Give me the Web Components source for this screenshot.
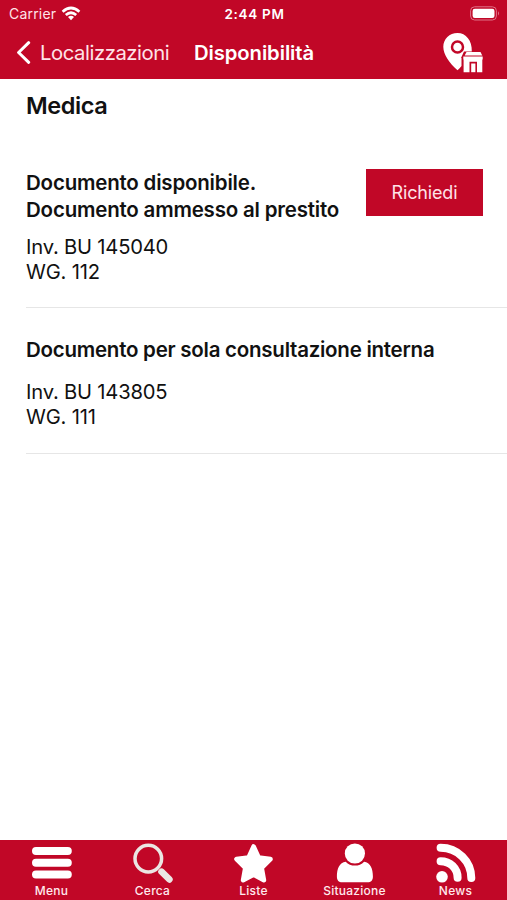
<!DOCTYPE html>
<html lang="it">
<head>
<meta charset="utf-8">
<title>Disponibilità</title>
<style>
    body {
        margin: 0;
        background: #fff;
        font-family: Inter, "Liberation Sans", sans-serif;
        color: #111;
    }
</style>
</head>
<body>
<app-screen>
    <status-bar slot="top" carrier="Carrier" time="2:44 PM"></status-bar>
    <nav-header slot="top" back="Localizzazioni">Disponibilità</nav-header>

    <library-section>
        <span slot="title">Medica</span>
        <copy-item action="Richiedi">
            <span slot="status">Documento disponibile.<br>Documento ammesso al prestito</span>
            <span slot="inventory">Inv. BU 145040</span>
            <span slot="shelf">WG. 112</span>
        </copy-item>
        <copy-item>
            <span slot="status">Documento per sola consultazione interna</span>
            <span slot="inventory">Inv. BU 143805</span>
            <span slot="shelf">WG. 111</span>
        </copy-item>
    </library-section>

    <tab-bar slot="bottom">
        <tab-item icon="menu">Menu</tab-item>
        <tab-item icon="search">Cerca</tab-item>
        <tab-item icon="star">Liste</tab-item>
        <tab-item icon="user">Situazione</tab-item>
        <tab-item icon="feed">News</tab-item>
    </tab-bar>
</app-screen>

<script>
class AppScreen extends HTMLElement {
    constructor() {
        super();
        this.attachShadow({ mode: 'open' });
    }

    connectedCallback() {
        this.shadowRoot.innerHTML = `
            <style>
                :host {
                    display: flex;
                    flex-direction: column;
                    height: 900px;
                    overflow: hidden;
                    --red: #c10727;
                }
                header {
                    height: 79px;
                    background: var(--red);
                    color: #fff;
                }
                main {
                    flex: 1;
                }
            </style>
            <header><slot name="top"></slot></header>
            <main><slot></slot></main>
            <slot name="bottom"></slot>
        `;
    }
}

class StatusBar extends HTMLElement {
    constructor() {
        super();
        this.attachShadow({ mode: 'open' });
    }

    connectedCallback() {
        this.shadowRoot.innerHTML = `
            <style>
                :host {
                    display: grid;
                    grid-template-columns: 1fr auto 1fr;
                    align-items: center;
                    height: 27px;
                    padding: 0 7px 0 9px;
                    font-size: 14px;
                }
                .carrier {
                    display: flex;
                    align-items: center;
                    gap: 5px;
                    color: #ffe3e8;
                    letter-spacing: 0.2px;
                }
                .time {
                    font-weight: 600;
                    font-size: 13.5px;
                    letter-spacing: 0.7px;
                }
                .battery {
                    justify-self: end;
                }
                svg {
                    display: block;
                }
            </style>
            <div class="carrier">
                <span>${this.getAttribute('carrier')}</span>
                <svg width="20" height="15" viewBox="0 0 20 15" fill="none" stroke="#fff" stroke-width="2.7">
                    <path d="M1.6 5.8Q10-1.8 18.4 5.8"/>
                    <path d="M4.8 9.1Q10 4.4 15.2 9.1"/>
                    <path d="M7 11.1Q10 8.5 13 11.1L10 14.2Z" fill="#fff" stroke="none"/>
                </svg>
            </div>
            <span class="time">${this.getAttribute('time')}</span>
            <svg class="battery" width="30" height="15" viewBox="0 0 30 15">
                <rect x=".6" y=".8" width="25.8" height="13.2" rx="4" fill="none" stroke="#df7288" stroke-width="1"/>
                <rect x="2.6" y="2.8" width="21.9" height="9.2" rx="2.2" fill="#fff"/>
                <path d="M28 5.2Q30 7.3 28 9.4Z" fill="#df7288"/>
            </svg>
        `;
    }
}

class NavHeader extends HTMLElement {
    constructor() {
        super();
        this.attachShadow({ mode: 'open' });
    }

    connectedCallback() {
        this.shadowRoot.innerHTML = `
            <style>
                :host {
                    display: flex;
                    align-items: center;
                    height: 51px;
                    padding: 0 24px 0 16px;
                    font-size: 20.3px;
                }
                .back {
                    display: flex;
                    align-items: center;
                    gap: 8px;
                    width: 178px;
                    color: #ffe3e8;
                    letter-spacing: -0.45px;
                }
                .title {
                    flex: 1;
                    font-weight: 600;
                    letter-spacing: -0.1px;
                }
                svg {
                    display: block;
                }
            </style>
            <div class="back">
                <svg width="16" height="24" viewBox="0 0 16 24" fill="none" stroke="#fff" stroke-width="3" stroke-linecap="round" stroke-linejoin="round">
                    <path d="M12.7 1.7 2.6 11.5l10.1 9.8"/>
                </svg>
                <span>${this.getAttribute('back')}</span>
            </div>
            <span class="title"><slot></slot></span>
            <svg width="40" height="40" viewBox="0 0 40 40">
                <path d="M14.5 0C6.4 0 .3 6.1.3 13.8c0 8.2 6.2 16.2 14.2 23.5 1.4-1.3 2.9-2.6 4-4.2v-8.1h-.5l3-6.5h7.8C29.2 7.6 23 0 14.5 0Z" fill="#fff"/>
                <circle cx="14.5" cy="14" r="5.5" fill="#fff" stroke="#c10727" stroke-width="2.5"/>
                <path d="M23.5 18.9h14l1.8 3.7H21.7Z" fill="#fff"/>
                <path d="M20.3 23.6h19.4v3H39.3v12.6h-5.3V28.7h-7.5v10.5h-5.9V26.6h-.3Z" fill="#fff"/>
                <path d="M28.2 30.5h4.2v8.7h-4.2Z" fill="#fff"/>
            </svg>
        `;
    }
}

class LibrarySection extends HTMLElement {
    constructor() {
        super();
        this.attachShadow({ mode: 'open' });
    }

    connectedCallback() {
        this.shadowRoot.innerHTML = `
            <style>
                :host {
                    display: block;
                    padding: 12px 0 0 26px;
                }
                h2 {
                    margin: 0 0 43px;
                    font-size: 23.5px;
                    font-weight: 600;
                    line-height: 30px;
                    letter-spacing: -0.4px;
                }
            </style>
            <h2><slot name="title"></slot></h2>
            <slot></slot>
        `;
    }
}

class CopyItem extends HTMLElement {
    constructor() {
        super();
        this.attachShadow({ mode: 'open' });
    }

    connectedCallback() {
        const action = this.getAttribute('action');
        this.shadowRoot.innerHTML = `
            <style>
                :host {
                    display: flex;
                    justify-content: space-between;
                    align-items: flex-start;
                    box-sizing: border-box;
                    height: 144px;
                    padding: 5px 24px 0 0;
                    border-bottom: 1px solid #e6e6e6;
                    white-space: nowrap;
                }
                :host(:not([action])) {
                    height: 146px;
                    padding-top: 28px;
                }
                .status {
                    margin-bottom: 11px;
                    font-size: 20.5px;
                    font-weight: 600;
                    line-height: 27px;
                    letter-spacing: -0.2px;
                }
                :host(:not([action])) .status {
                    margin-bottom: 16px;
                    letter-spacing: -0.25px;
                }
                .place {
                    font-size: 20.2px;
                    line-height: 25px;
                    letter-spacing: -0.2px;
                }
                .place div {
                    height: 25px;
                }
                button {
                    width: 117px;
                    height: 47px;
                    margin: 0;
                    padding: 0;
                    border: 0;
                    background: var(--red);
                    color: #ffe3e8;
                    font: 18px Inter, "Liberation Sans", sans-serif;
                    letter-spacing: -0.15px;
                }
            </style>
            <div>
                <div class="status"><slot name="status"></slot></div>
                <div class="place">
                    <div><slot name="inventory"></slot></div>
                    <div><slot name="shelf"></slot></div>
                </div>
            </div>
            ${action ? `<button>${action}</button>` : ''}
        `;
    }
}

class TabBar extends HTMLElement {
    constructor() {
        super();
        this.attachShadow({ mode: 'open' });
    }

    connectedCallback() {
        this.shadowRoot.innerHTML = `
            <style>
                :host {
                    display: grid;
                    grid-template-columns: repeat(5, 101px);
                    height: 60px;
                    background: var(--red);
                    color: #ffe9ed;
                }
            </style>
            <slot></slot>
        `;
    }
}

const icons = {
    menu: '<path d="M5 8h31.8M5 19.7h31.8M5 31.4h31.8" stroke="#fff" stroke-width="8" stroke-linecap="round"/>',
    search: `
        <circle cx="16.3" cy="15.6" r="13.3" fill="none" stroke="#ebe6e3" stroke-width="3.5"/>
        <path d="M29.5 28.7l7.9 7.7" stroke="#ebe6e3" stroke-width="6.6" stroke-linecap="round"/>`,
    star: '<path d="M20.6 3.5l5 11 11.9 1.6-8.8 8.8 2.2 12.3L20.6 31.7l-10.5 5.5 2.2-12.3-8.8-8.8 12.1-1.6Z" fill="#fff" stroke="#fff" stroke-width="4.6" stroke-linejoin="round"/>',
    user: `
        <circle cx="20.9" cy="10.5" r="10.1" fill="#fff"/>
        <path d="M11.7 18.7C5.5 19.6 2.9 25.5 2.9 33.5c0 4 1.9 5.8 5.3 5.8h25.4c3.4 0 5.3-1.8 5.3-5.8 0-8-2.6-13.9-8.8-14.8-4.6 5.2-13.8 5.2-18.4 0Z" fill="#fff"/>`,
    feed: `
        <circle cx="7" cy="33.800" r="5.800" fill="#fff"/>
        <path d="M5.600 18.200c9.500 0 17 7.200 17 16.600M5.600 4.800c17 0 30.700 13.400 30.700 30.300" fill="none" stroke="#fff" stroke-width="8" stroke-linecap="round"/>`
};

class TabItem extends HTMLElement {
    constructor() {
        super();
        this.attachShadow({ mode: 'open' });
    }

    connectedCallback() {
        this.shadowRoot.innerHTML = `
            <style>
                :host {
                    display: flex;
                    flex-direction: column;
                    align-items: center;
                    padding-top: 3px;
                    font-size: 12px;
                    font-weight: 500;
                    line-height: 16px;
                    letter-spacing: 0.25px;
                }
                svg {
                    display: block;
                    height: 40px;
                    overflow: visible;
                }
                span {
                    padding-left: 2px;
                }
            </style>
            <svg width="40" height="40" viewBox="0 0 40 40" fill="none">${icons[this.getAttribute('icon')]}</svg>
            <span><slot></slot></span>
        `;
    }
}

customElements.define('app-screen', AppScreen);
customElements.define('status-bar', StatusBar);
customElements.define('nav-header', NavHeader);
customElements.define('library-section', LibrarySection);
customElements.define('copy-item', CopyItem);
customElements.define('tab-bar', TabBar);
customElements.define('tab-item', TabItem);
</script>
</body>
</html>
